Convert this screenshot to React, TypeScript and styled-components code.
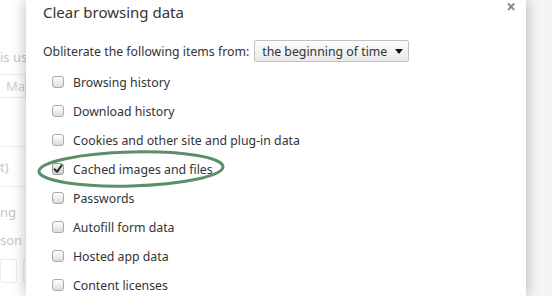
import styled, { createGlobalStyle } from 'styled-components';

const GlobalStyle = createGlobalStyle`
  html, body {
    margin: 0;
    padding: 0;
    width: 552px;
    height: 296px;
    overflow: hidden;
    background: #ffffff;
    font-family: "Noto Sans", "DejaVu Sans", sans-serif;
  }
`;

const Page = styled.div`
  display: flex;
  width: 552px;
  height: 296px;
  overflow: hidden;
`;

const Backdrop = styled.div`
  width: 26px;
  flex-shrink: 0;
  overflow: hidden;
  background: #ffffff;
  color: #c6c6c6;
  font-size: 13px;
  display: flex;
  flex-direction: column;
  white-space: nowrap;
`;

const FadedText = styled.div<{ $top: number; $indent?: number }>`
  margin-top: ${p => p.$top}px;
  margin-left: ${p => p.$indent ?? 0}px;
  line-height: 16px;
`;

const FadedInput = styled.div`
  margin-top: 9px;
  height: 22px;
  border: 1px solid #ececec;
  border-left: none;
  padding-left: 6px;
  line-height: 22px;
  color: #cfcfcf;
`;

const FadedRule = styled.div<{ $top: number }>`
  margin-top: ${p => p.$top}px;
  border-top: 1px solid #eeeeee;
`;

const FadedButtons = styled.div`
  margin-top: 11px;
  display: flex;
  gap: 6px;
`;

const FadedButton = styled.div<{ $w: number }>`
  width: ${p => p.$w}px;
  height: 22px;
  border: 1px solid #ececec;
  border-radius: 2px;
  flex-shrink: 0;
`;

const Dialog = styled.div`
  position: relative;
  width: 500px;
  flex-shrink: 0;
  background: #ffffff;
  box-shadow: 0 0 14px rgba(0, 0, 0, 0.28);
  padding: 1px 0 0 17px;
  box-sizing: border-box;
  color: #333333;
  z-index: 1;
`;

const Title = styled.h1`
  margin: 0;
  font-size: 15px;
  font-weight: 400;
  line-height: 22px;
  color: #333333;
`;

const CloseButton = styled.div`
  position: absolute;
  top: 0;
  right: 10px;
  font-size: 17px;
  font-weight: 700;
  color: #8a8a8a;
  line-height: 14px;
`;

const RangeRow = styled.div`
  margin-top: 17px;
  display: flex;
  align-items: center;
  gap: 5px;
  height: 22px;
  font-size: 12.3px;
`;

const Select = styled.div`
  display: flex;
  align-items: center;
  gap: 8px;
  height: 22px;
  box-sizing: border-box;
  padding: 0 5px 0 7px;
  border: 1px solid #c2c2c2;
  border-radius: 2px;
  background: linear-gradient(#fdfdfd, #e9e9e9);
  font-size: 12.3px;
`;

const Caret = styled.span`
  width: 0;
  height: 0;
  border-left: 4px solid transparent;
  border-right: 4px solid transparent;
  border-top: 5px solid #111111;
`;

const List = styled.div`
  margin-top: 6px;
  padding-left: 9px;
  display: flex;
  flex-direction: column;
`;

const Option = styled.label`
  display: flex;
  align-items: center;
  gap: 9px;
  height: 29px;
  font-size: 12.3px;
  color: #333333;
`;

const Box = styled.span<{ $checked?: boolean }>`
  width: 12px;
  height: 12px;
  box-sizing: border-box;
  border: 1px solid ${p => (p.$checked ? '#9a9a9a' : '#a9a9a9')};
  border-radius: 3px;
  background: ${p => (p.$checked ? 'linear-gradient(#f2f2f2, #cfcfcf)' : 'linear-gradient(#ffffff, #dcdcdc)')};
  display: flex;
  align-items: center;
  justify-content: center;
  flex-shrink: 0;
  margin-top: -1px;
`;

const Highlight = styled.svg`
  position: absolute;
  left: 9px;
  top: 148px;
  pointer-events: none;
`;

const Shade = styled.div`
  flex: 1;
  background: #f5f5f5;
`;

const options = [
  { label: 'Browsing history', checked: false },
  { label: 'Download history', checked: false },
  { label: 'Cookies and other site and plug-in data', checked: false },
  { label: 'Cached images and files', checked: true },
  { label: 'Passwords', checked: false },
  { label: 'Autofill form data', checked: false },
  { label: 'Hosted app data', checked: false },
  { label: 'Content licenses', checked: false },
];

const Check = () => (
  <svg width="10" height="10" viewBox="0 0 10 10">
    <path d="M1.5 5.2 L4 7.8 L8.6 1.4" fill="none" stroke="#2a2a2a" strokeWidth="2" strokeLinecap="round" strokeLinejoin="round" />
  </svg>
);

export default function App() {
  return (
    <>
      <GlobalStyle />
      <Page>
        <Backdrop>
          <FadedText $top={49}>is us</FadedText>
          <FadedInput>Ma</FadedInput>
          <FadedRule $top={48} />
          <FadedText $top={12}>t)</FadedText>
          <FadedRule $top={11} />
          <FadedText $top={17}>ng</FadedText>
          <FadedText $top={12}>son t</FadedText>
          <FadedButtons>
            <FadedButton $w={15} />
            <FadedButton $w={20} />
          </FadedButtons>
        </Backdrop>
        <Dialog>
          <Title>Clear browsing data</Title>
          <CloseButton>×</CloseButton>
          <RangeRow>
            Obliterate the following items from:
            <Select>
              the beginning of time
              <Caret />
            </Select>
          </RangeRow>
          <List>
            {options.map(o => (
              <Option key={o.label}>
                <Box $checked={o.checked}>{o.checked && <Check />}</Box>
                {o.label}
              </Option>
            ))}
          </List>
          <Highlight width="194" height="42" viewBox="0 0 194 42">
            <ellipse cx="96" cy="21" rx="92" ry="17" fill="none" stroke="#5d8e69" strokeWidth="3" transform="rotate(-1.5 96 21)" />
          </Highlight>
        </Dialog>
        <Shade />
      </Page>
    </>
  );
}
